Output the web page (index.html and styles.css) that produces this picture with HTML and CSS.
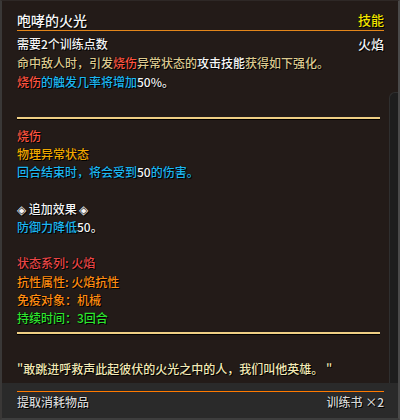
FILE: index.html
```html
<!DOCTYPE html>
<html lang="zh-CN">
<head>
<meta charset="utf-8">
<title>咆哮的火光</title>
<link rel="stylesheet" href="styles.css">
</head>
<body>
<div class="tip">
  <div class="main">
    <div class="content">
      <div class="head">
        <span class="title">咆哮的火光</span>
        <span class="kind">技能</span>
      </div>
      <div class="row">
        <span>需要2个训练点数</span>
        <span>火焰</span>
      </div>
      <div class="desc">
        <p><span class="tan">命中敌人时，引发</span><span class="red">烧伤</span><span class="tan">异常状态的</span><span class="white">攻击技能</span><span class="tan">获得如下强化。</span></p>
        <p><span class="red">烧伤</span><span class="cyan">的触发几率将增加</span><span class="white">50%。</span></p>
      </div>
      <div class="sep"></div>
      <div class="block">
        <p class="red">烧伤</p>
        <p class="gold">物理异常状态</p>
        <p><span class="cyan">回合结束时，将会受到</span><span class="white">50</span><span class="cyan">的伤害。</span></p>
        <p class="blank"></p>
        <p class="white">◈ 追加效果 ◈</p>
        <p><span class="cyan">防御力降低</span><span class="white">50。</span></p>
        <p class="blank"></p>
        <p class="red2">状态系列: 火焰</p>
        <p class="orange">抗性属性: 火焰抗性</p>
        <p class="orange">免疫对象：机械</p>
        <p class="green">持续时间：3回合</p>
      </div>
      <div class="sep sep2"></div>
      <p class="quote">"敢跳进呼救声此起彼伏的火光之中的人，我们叫他英雄。 "</p>
    </div>
    <div class="track"></div>
  </div>
  <div class="footer">
    <div class="foot-row">
      <span>提取消耗物品</span>
      <span>训练书 ×2</span>
    </div>
  </div>
</div>
</body>
</html>
```

FILE: styles.css
```css
* { box-sizing: border-box; }
html, body { margin: 0; padding: 0; background: #222; }
p { margin: 0; }

.tip {
  width: 400px;
  height: 420px;
  display: flex;
  flex-direction: column;
  background: #231b18;
  border-left: 2px solid #3a3837;
  border-right: 2px solid #4a4a4a;
  border-top: 1px solid #2e2826;
  border-bottom: 2px solid #3e3e3e;
  font-family: "Noto Sans CJK SC", "Noto Sans", sans-serif;
  font-size: 12px;
  font-weight: 500;
  color: #f0f0f0;
  text-shadow: 1px 1px 0 #000, 0 0 1px #000;
}

.main {
  flex: 1;
  display: flex;
  min-height: 0;
}

.content {
  flex: 1;
  padding: 9px 5px 0 15px;
}

.head {
  display: flex;
  justify-content: space-between;
  align-items: center;
  height: 21px;
  border-bottom: 1px solid #e3861a;
}
.title { font-size: 14px; line-height: 20px; color: #f6f6f6; }
.kind { font-size: 13px; color: #f2e400; line-height: 20px; }

.row {
  display: flex;
  justify-content: space-between;
  padding-top: 3px;
  line-height: 19px;
  color: #f4f4f4;
}
.row span:last-child { font-size: 13px; }

.desc { line-height: 19px; }

.sep {
  height: 2px;
  margin: 26px 4px 0 0;
  background: #efcf84;
  box-shadow: 0 1px 0 #000;
}

.block {
  margin-top: 8px;
  line-height: 18.2px;
}
.blank { height: 18.2px; }

.sep2 { margin-top: 5px; }

.quote {
  margin-top: 26px;
  line-height: 18px;
  color: #f3e9b6;
}

.tan { color: #dcc98f; }
.red { color: #ff5541; }
.red2 { color: #ea4747; }
.white { color: #f6f6f6; }
.cyan { color: #1db6f0; }
.gold { color: #f2a900; }
.orange { color: #ff8c12; }
.green { color: #2fe52f; }

.track {
  width: 9px;
  margin-top: 91px;
  background: #1d1d1d;
  border-left: 1px solid #2f2f2f;
  border-top: 1px solid #2f2f2f;
  border-top-left-radius: 6px;
}

.footer {
  height: 35px;
  background: #2a2a2a;
  padding: 8px 14px 0 15px;
}
.foot-row {
  display: flex;
  justify-content: space-between;
  border-top: 1px solid #ff7a00;
  line-height: 19px;
  color: #d6d6d6;
}
```
